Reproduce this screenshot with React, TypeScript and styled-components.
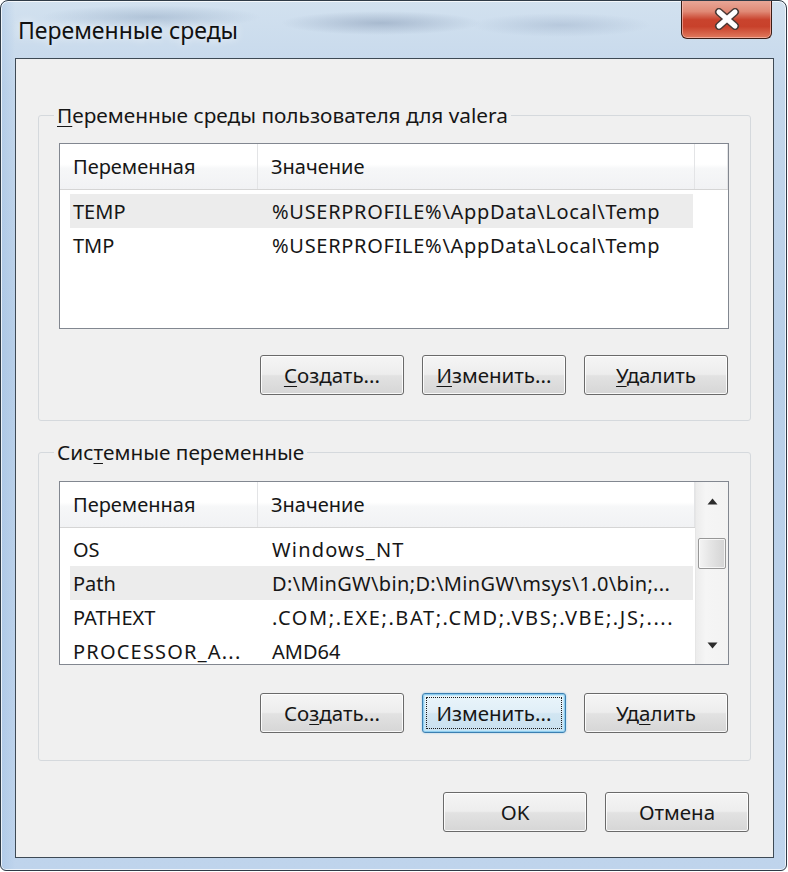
import React from "react";
import styled, { createGlobalStyle, css } from "styled-components";

const FONT = `"Noto Sans", "Open Sans", "Liberation Sans", sans-serif`;

const Global = createGlobalStyle`
  html, body { margin: 0; padding: 0; background: #ffffff; }
  body { font-family: ${FONT}; color: #1b1b1b; }
  * { box-sizing: border-box; }
`;

const Window = styled.div`
  width: 787px;
  height: 871px;
  border: 1px solid #2f3b47;
  border-radius: 8px 8px 6px 6px;
  background:
    radial-gradient(ellipse 110px 12px at 150px 16px, rgba(120, 145, 175, 0.35), transparent),
    radial-gradient(ellipse 100px 12px at 380px 22px, rgba(110, 130, 160, 0.4), transparent),
    radial-gradient(ellipse 90px 12px at 560px 24px, rgba(130, 150, 180, 0.3), transparent),
    linear-gradient(90deg, rgba(150, 185, 225, 0.35) 0px, rgba(150, 185, 225, 0) 14px),
    linear-gradient(180deg, #d2e1ef 0%, #c4d7eb 10%, #b8cfe8 40%, #bfd4ec 100%);
  box-shadow: inset 0 0 0 1px rgba(255, 255, 255, 0.75);
  display: flex;
  flex-direction: column;
  padding: 0 12px 12px 14px;
  overflow: hidden;
`;

const TitleBar = styled.div`
  height: 57px;
  display: flex;
  align-items: flex-start;
  flex-shrink: 0;
`;

const Title = styled.div`
  font-size: 23px;
  line-height: 28px;
  padding: 15px 0 0 3px;
  color: #111;
  text-shadow: 0 0 8px rgba(255, 255, 255, 0.9);
`;

const CloseButton = styled.div`
  margin-left: auto;
  margin-right: 2px;
  margin-top: -1px;
  width: 91px;
  height: 39px;
  border: 1px solid #3b1d16;
  border-top: none;
  border-radius: 0 0 6px 6px;
  background: linear-gradient(
    180deg,
    #e9a99a 0%,
    #e08a76 30%,
    #c9432d 52%,
    #c8412b 70%,
    #e07a5e 100%
  );
  box-shadow: inset 0 0 0 1px rgba(255, 210, 200, 0.55);
  display: flex;
  align-items: center;
  justify-content: center;
`;

const Client = styled.div`
  flex: 1;
  border: 1px solid #3e4a55;
  background: #f0f0f0;
  display: flex;
  flex-direction: column;
  padding: 44px 22px 25px 22px;
`;

const Group = styled.fieldset<{ $gap?: number; $padTop: number; $padBottom: number }>`
  margin: ${(p) => p.$gap ?? 0}px 0 0 0;
  padding: ${(p) => p.$padTop}px 21px ${(p) => p.$padBottom}px 20px;
  border: 1px solid #d5d9dd;
  border-radius: 3px;
  min-width: 0;
`;

const Legend = styled.legend`
  font-size: 20.8px;
  line-height: 24px;
  padding: 0 3px;
  margin-left: -5px;
  color: #161616;
`;

const List = styled.div<{ $h: number }>`
  height: ${(p) => p.$h}px;
  border: 1px solid #828790;
  background: #ffffff;
  display: flex;
  overflow: hidden;
`;

const ListMain = styled.div`
  flex: 1;
  min-width: 0;
  display: flex;
  flex-direction: column;
`;

const Header = styled.div<{ $stub: boolean }>`
  height: 46px;
  flex-shrink: 0;
  display: grid;
  grid-template-columns: ${(p) => (p.$stub ? "198px 437px 1fr" : "198px 1fr")};
  border-bottom: 1px solid #d5d5d5;
  background: linear-gradient(180deg, #ffffff 0%, #ffffff 45%, #f6f7f8 55%, #f1f2f4 100%);
`;

const HeaderCell = styled.div<{ $pad: number }>`
  display: flex;
  align-items: center;
  padding-left: ${(p) => p.$pad}px;
  font-size: 20px;
  color: #161616;
  border-right: 1px solid #e3e4e6;
  white-space: nowrap;
`;

const Rows = styled.div<{ $right: number }>`
  padding: 4px ${(p) => p.$right}px 0 10px;
  display: flex;
  flex-direction: column;
`;

const Row = styled.div<{ $hl?: boolean }>`
  height: 34px;
  flex-shrink: 0;
  display: grid;
  grid-template-columns: 199px 1fr;
  align-items: center;
  background: ${(p) => (p.$hl ? "#ececec" : "transparent")};
`;

const Cell = styled.div<{ $ls?: number }>`
  padding-left: 3px;
  font-size: 20px;
  letter-spacing: ${(p) => p.$ls ?? 0}px;
  color: #161616;
  white-space: nowrap;
  overflow: hidden;
`;

const ScrollBar = styled.div`
  width: 33px;
  flex-shrink: 0;
  border-left: 1px solid #e6e6e6;
  background: linear-gradient(90deg, #ececec 0%, #f5f5f5 30%, #f3f3f3 100%);
  display: flex;
  flex-direction: column;
  align-items: center;
`;

const Arrow = styled.div`
  height: 38px;
  display: flex;
  align-items: center;
  justify-content: center;
`;

const Thumb = styled.div`
  margin-top: 18px;
  width: 28px;
  height: 31px;
  border: 1px solid #979797;
  border-radius: 2px;
  background: linear-gradient(90deg, #f4f4f4 0%, #e6e6e6 40%, #d4d4d4 100%);
  box-shadow: inset 0 0 0 1px rgba(255, 255, 255, 0.7);
`;

const Spacer = styled.div`
  flex: 1;
`;

const ButtonRow = styled.div<{ $top: number; $right?: number }>`
  display: flex;
  justify-content: flex-end;
  gap: 18px;
  margin-top: ${(p) => p.$top}px;
  margin-right: ${(p) => p.$right ?? 0}px;
`;

const Button = styled.div<{ $focused?: boolean }>`
  position: relative;
  width: 144px;
  height: 40px;
  border: 1px solid #6a6a6a;
  border-radius: 3px;
  background: linear-gradient(180deg, #f5f5f5 0%, #ededed 48%, #e2e2e2 52%, #d6d6d6 100%);
  box-shadow: inset 0 0 0 1px rgba(255, 255, 255, 0.85);
  display: flex;
  align-items: center;
  justify-content: center;
  font-size: 20.5px;
  color: #161616;
  flex-shrink: 0;
  ${(p) =>
    p.$focused &&
    css`
      border-color: #3c7fb1;
      background: linear-gradient(180deg, #eaf5fb 0%, #e0eef7 48%, #d2e6f2 52%, #c9e0ef 100%);
      box-shadow: inset 0 0 0 1px #8fcdee, inset 0 0 0 2px rgba(190, 228, 248, 0.9),
        0 0 2px rgba(90, 170, 220, 0.6);
      &::after {
        content: "";
        position: absolute;
        inset: 3px;
        border: 1px dotted #1a1a1a;
        border-radius: 1px;
      }
    `}
`;

const U = styled.span`
  text-decoration: underline;
  text-underline-offset: 3px;
  text-decoration-thickness: 1px;
`;

const CloseGlyph = () => (
  <svg width="26" height="22" viewBox="0 0 26 22">
    <g strokeLinecap="round">
      <line x1="5" y1="4" x2="21" y2="18" stroke="#4a3a36" strokeWidth="8" />
      <line x1="21" y1="4" x2="5" y2="18" stroke="#4a3a36" strokeWidth="8" />
      <line x1="5" y1="4" x2="21" y2="18" stroke="#ffffff" strokeWidth="5" />
      <line x1="21" y1="4" x2="5" y2="18" stroke="#ffffff" strokeWidth="5" />
    </g>
  </svg>
);

const UpArrow = () => (
  <svg width="11" height="7" viewBox="0 0 11 7">
    <polygon points="5.5,0.5 10.5,6.5 0.5,6.5" fill="#2c2c2c" />
  </svg>
);

const DownArrow = () => (
  <svg width="11" height="7" viewBox="0 0 11 7">
    <polygon points="0.5,0.5 10.5,0.5 5.5,6.5" fill="#2c2c2c" />
  </svg>
);

type Var = { name: string; value: string; hl?: boolean; ls?: number; nls?: number };

const userVars: Var[] = [
  { name: "TEMP", value: "%USERPROFILE%\\AppData\\Local\\Temp", hl: true, ls: 0.7 },
  { name: "TMP", value: "%USERPROFILE%\\AppData\\Local\\Temp", ls: 0.7 },
];

const sysVars: Var[] = [
  { name: "OS", value: "Windows_NT", ls: 1.2 },
  { name: "Path", value: "D:\\MinGW\\bin;D:\\MinGW\\msys\\1.0\\bin;...", hl: true, ls: 0.35 },
  { name: "PATHEXT", value: ".COM;.EXE;.BAT;.CMD;.VBS;.VBE;.JS;....", ls: 1.6 },
  { name: "PROCESSOR_A...", value: "AMD64", nls: 1.2 },
];

const VarRows = ({ items, right }: { items: Var[]; right: number }) => (
  <Rows $right={right}>
    {items.map((v) => (
      <Row key={v.name} $hl={v.hl}>
        <Cell $ls={v.nls}>{v.name}</Cell>
        <Cell $ls={v.ls}>{v.value}</Cell>
      </Row>
    ))}
  </Rows>
);

export default function App() {
  return (
    <>
      <Global />
      <Window>
        <TitleBar>
          <Title>Переменные среды</Title>
          <CloseButton>
            <CloseGlyph />
          </CloseButton>
        </TitleBar>
        <Client>
          <Group $padTop={16} $padBottom={25}>
            <Legend>
              <U>П</U>еременные среды пользователя для valera
            </Legend>
            <List $h={186}>
              <ListMain>
                <Header $stub>
                  <HeaderCell $pad={13}>Переменная</HeaderCell>
                  <HeaderCell $pad={13}>Значение</HeaderCell>
                  <HeaderCell $pad={0} />
                </Header>
                <VarRows items={userVars} right={35} />
              </ListMain>
            </List>
            <ButtonRow $top={26} $right={1}>
              <Button>
                <span>
                  <U>С</U>оздать...
                </span>
              </Button>
              <Button>
                <span>
                  <U>И</U>зменить...
                </span>
              </Button>
              <Button>
                <span>
                  <U>У</U>далить
                </span>
              </Button>
            </ButtonRow>
          </Group>
          <Group $gap={19} $padTop={17} $padBottom={27}>
            <Legend>
              Сис<U>т</U>емные переменные
            </Legend>
            <List $h={184}>
              <ListMain>
                <Header $stub={false}>
                  <HeaderCell $pad={13}>Переменная</HeaderCell>
                  <HeaderCell $pad={13}>Значение</HeaderCell>
                </Header>
                <VarRows items={sysVars} right={2} />
              </ListMain>
              <ScrollBar>
                <Arrow>
                  <UpArrow />
                </Arrow>
                <Thumb />
                <Spacer />
                <Arrow>
                  <DownArrow />
                </Arrow>
              </ScrollBar>
            </List>
            <ButtonRow $top={28} $right={1}>
              <Button>
                <span>
                  Со<U>з</U>дать...
                </span>
              </Button>
              <Button $focused>
                <span>Изменить...</span>
              </Button>
              <Button>
                <span>
                  Уд<U>а</U>лить
                </span>
              </Button>
            </ButtonRow>
          </Group>
          <ButtonRow $top={31} $right={2}>
            <Button>OK</Button>
            <Button>Отмена</Button>
          </ButtonRow>
        </Client>
      </Window>
    </>
  );
}
